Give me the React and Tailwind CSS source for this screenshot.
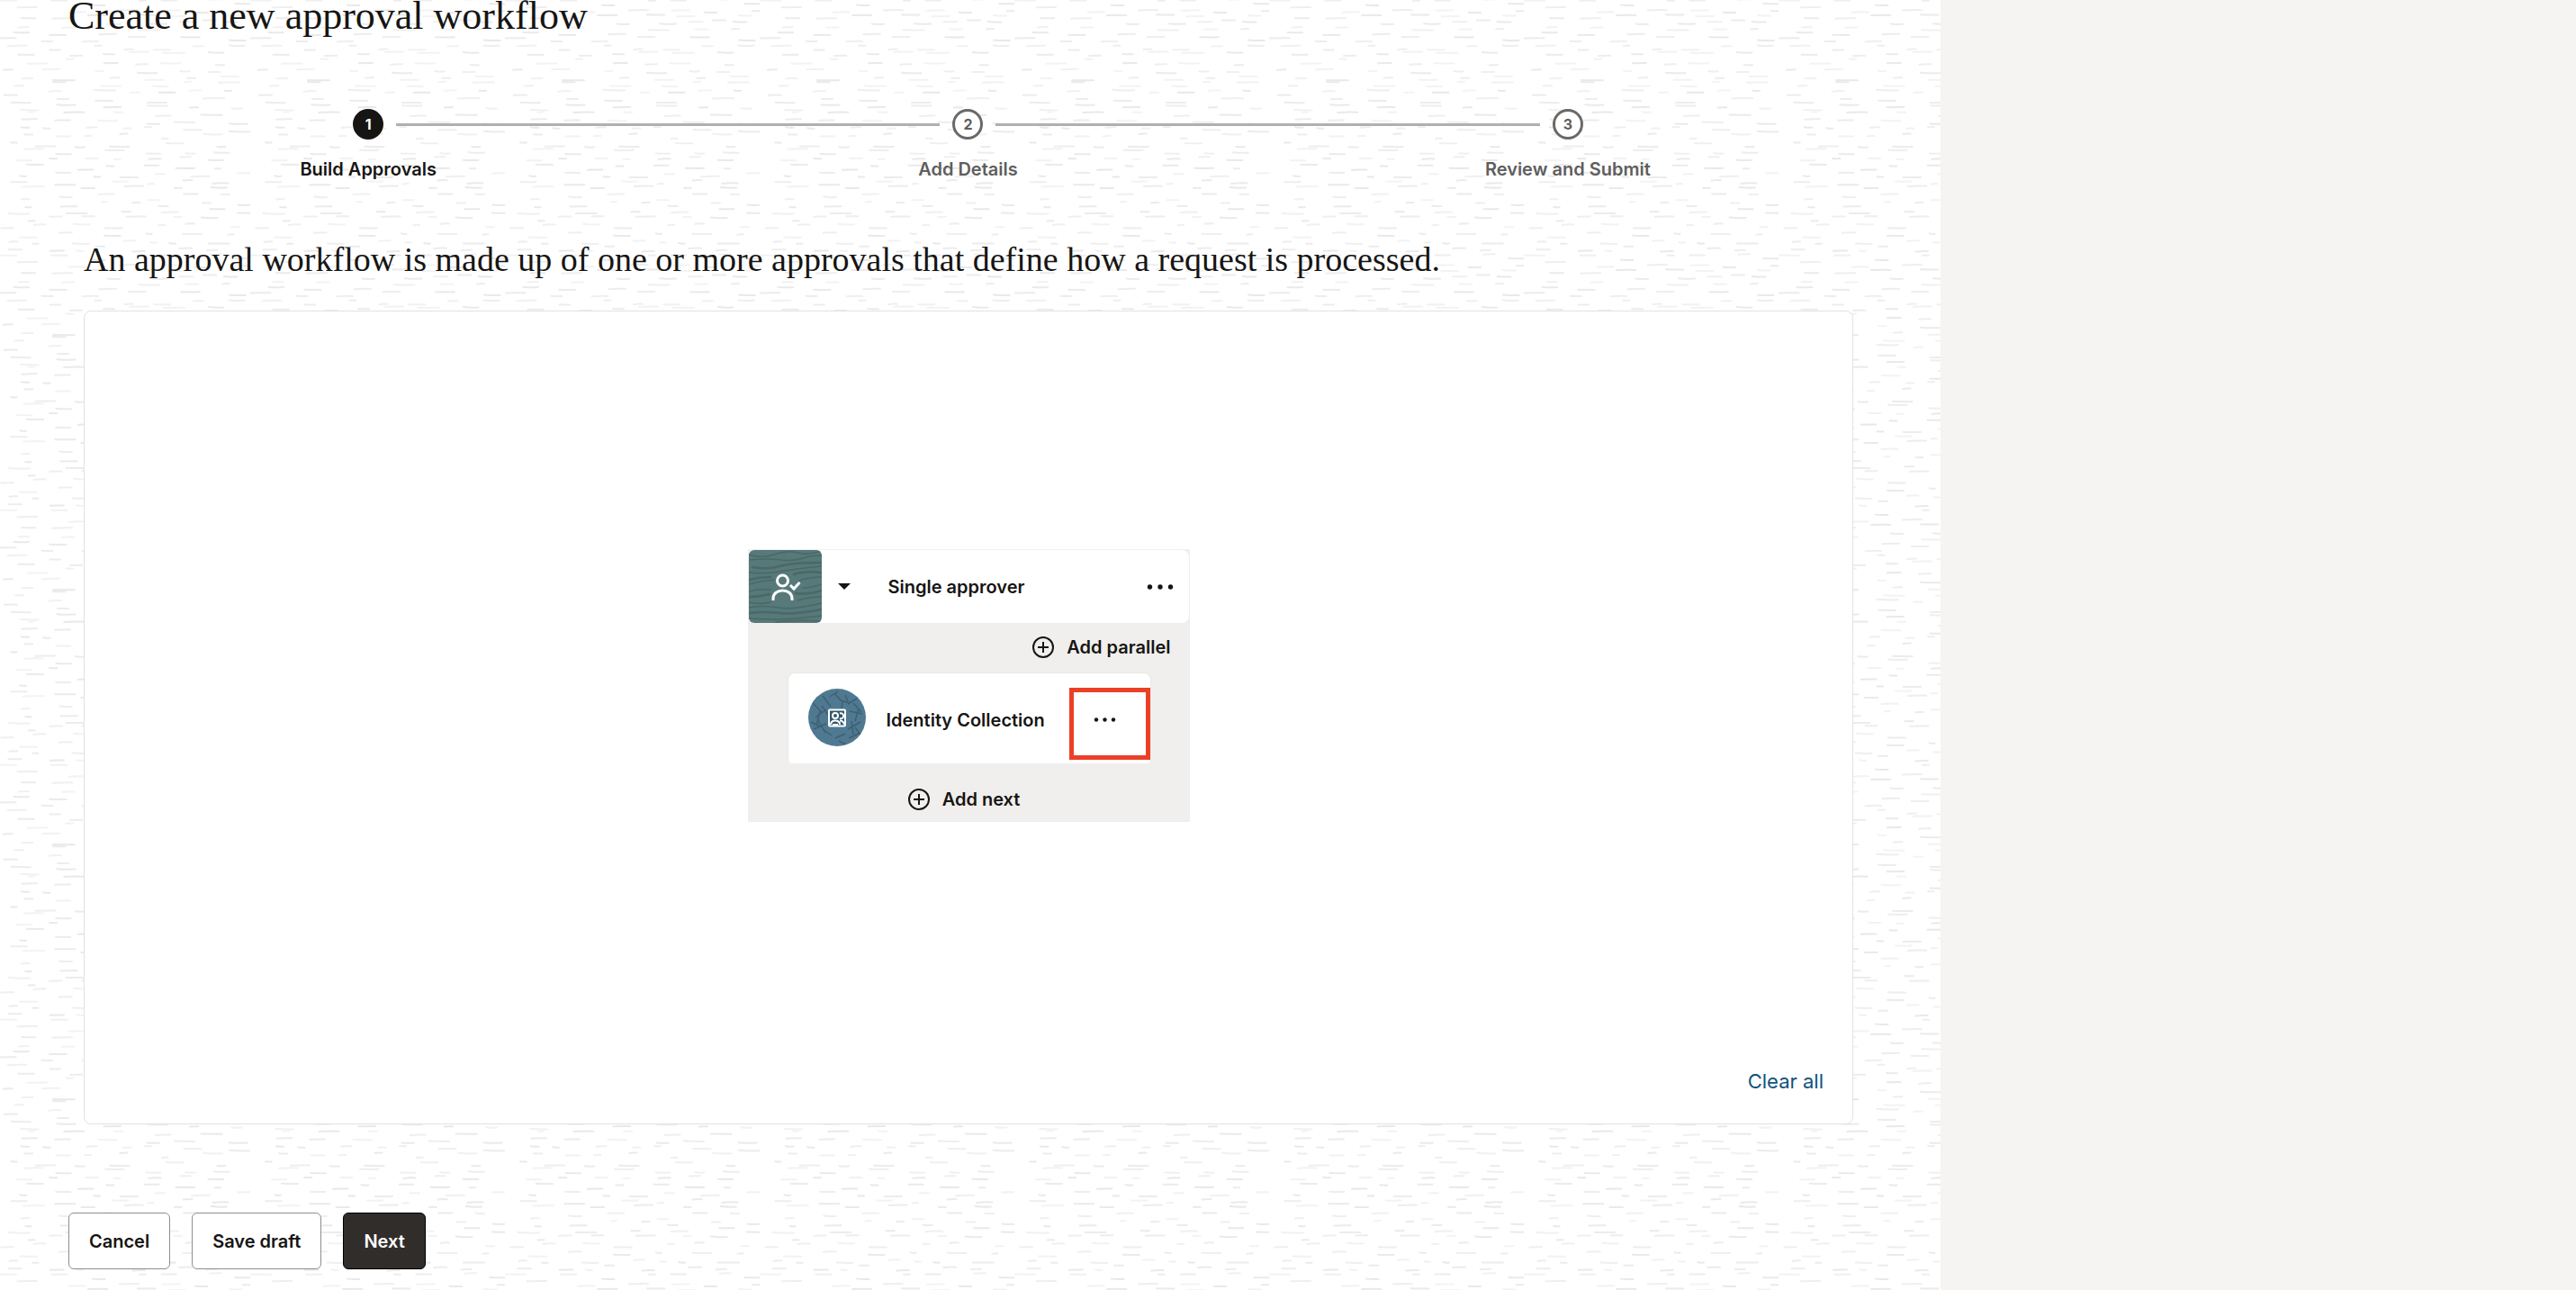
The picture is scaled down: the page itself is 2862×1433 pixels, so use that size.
import React from "react";

const TILE = 283;

/* Deterministic short strokes that repeat every TILE pixels. */
function makeStrokes() {
  let seed = 7;
  const rand = () => {
    seed = (seed * 16807) % 2147483647;
    return seed / 2147483647;
  };
  const strokes = [];
  const rows = 34;
  for (let r = 0; r < rows; r++) {
    let x = rand() * 40;
    const baseY = (r * TILE) / rows + 4;
    while (x < TILE - 8) {
      const length = 6 + rand() * 18;
      strokes.push({
        x,
        y: baseY + (rand() - 0.5) * 7,
        length: Math.min(length, TILE - x),
        tilt: (rand() - 0.5) * 2,
        tone: 0.5 + rand() * 0.5,
      });
      x += length + 14 + rand() * 28;
    }
  }
  return strokes;
}

const STROKES = makeStrokes();

function Texture() {
  return (
    <svg className="absolute inset-0 h-full w-full" aria-hidden="true">
      <defs>
        <pattern id="weave" x="-5" y="40" width={TILE} height={TILE} patternUnits="userSpaceOnUse">
          {STROKES.map((s, i) => (
            <path
              key={i}
              d={`M${s.x} ${s.y} q${s.length / 2} ${s.tilt} ${s.length} ${s.tilt / 2}`}
              stroke="#e8e8e8"
              strokeOpacity={s.tone}
              strokeWidth="2"
              strokeLinecap="round"
              fill="none"
            />
          ))}
        </pattern>
      </defs>
      <rect width="100%" height="100%" fill="url(#weave)" />
    </svg>
  );
}

const STEPS = [
  { number: 1, label: "Build Approvals", current: true },
  { number: 2, label: "Add Details", current: false },
  { number: 3, label: "Review and Submit", current: false },
];

function Steps() {
  return (
    <ol className="mt-[85px] grid grid-cols-3">
      {STEPS.map((step, i) => (
        <li key={step.number} className="relative flex flex-col items-center" aria-current={step.current ? "step" : undefined}>
          {i < STEPS.length - 1 && (
            <span className="absolute top-4 left-1/2 mx-[31px] h-[3px] w-[calc(100%-62px)] bg-[#b0b0b0]" />
          )}
          <span
            className={
              step.current
                ? "flex size-[34px] items-center justify-center rounded-full bg-[#161513] text-base font-bold text-white"
                : "flex size-[34px] items-center justify-center rounded-full border-[3px] border-[#6a6968] bg-white text-base font-bold text-[#5f5e5d]"
            }
          >
            {step.number}
          </span>
          <span
            className={
              step.current
                ? "mt-[19px] text-xl leading-7 font-semibold text-[#161513]"
                : "mt-[19px] text-xl leading-7 font-semibold text-[#5f5e5d]"
            }
          >
            {step.label}
          </span>
        </li>
      ))}
    </ol>
  );
}

function ApproverTile() {
  return (
    <svg className="size-[81px] shrink-0 rounded-md" viewBox="0 0 81 81" fill="none" aria-hidden="true">
      <rect width="81" height="81" fill="#57797a" />
      <g stroke="#4a6867" strokeWidth="1.500" strokeLinecap="round">
        <path d="M0 5q14 5 28 0t26-2t27-2" />
        <path d="M0 11q20-2 36 0t30-4l15-1" />
        <path d="M4 19q16 3 30-1t47-4" strokeWidth="2.500" />
        <path d="M0 25q18 2 34-1t47-6" />
        <path d="M0 33q12-3 24-3M50 27q12-4 31-2" strokeWidth="2.500" />
        <path d="M0 38q14-4 28-5M56 34q12-4 25-4" />
        <path d="M0 46q10-3 24-2M60 42q10 0 21-4" />
        <path d="M0 52q12 0 23-3M52 48q12 2 29-3" strokeWidth="2.500" />
        <path d="M0 58q12 3 24 0M54 56q14-4 27-4" />
        <path d="M0 64q16-3 32 0t49-5" />
        <path d="M0 70q18-2 34 0t47-4" strokeWidth="2.500" />
        <path d="M0 76q18 1 32 1t49-4" />
        <path d="M30 80q24-3 51-1" />
      </g>
      <g stroke="#fff" strokeWidth="3">
        <circle cx="37.500" cy="34" r="6" />
        <path d="M27 56v-2c0-6 5-9 10.500-9s10.500 3 10.500 9v2" />
        <path d="M46 39l4 4 6.500-7" />
      </g>
    </svg>
  );
}

function CollectionBadge() {
  return (
    <svg className="size-16 shrink-0" viewBox="0 0 64 64" fill="none" aria-hidden="true">
      <defs>
        <clipPath id="disc">
          <circle cx="32" cy="32" r="32" />
        </clipPath>
      </defs>
      <g clipPath="url(#disc)">
        <rect width="64" height="64" fill="#4f7990" />
        <g stroke="#3e5f74" strokeWidth="1.500">
          <path d="M5 16l10 10M16 8l9 12M24 9l9-6M29 5l8 9M41 7l3 7M44 17l10-6M8 32l12-9M13 25l-4 16M3 37l10 5M11 35l8 14M6 45l14-6M17 46l9 6M30 55l11-5M45 55l11-5M52 43l8 11M48 36l2 15M44 45l14-8M56 22l-4 14M46 25l14 3M50 16l9 10M22 29l-7-10M36 13l10 3M38 14l-1 8M34 58l8 4" />
        </g>
        <rect x="23" y="23.500" width="18" height="18" rx="1" fill="#31576c" stroke="#fff" strokeWidth="2" />
        <circle cx="30" cy="30" r="3" stroke="#fff" strokeWidth="2" />
        <path d="M35 27.500a3 3 0 1 1 0 5.500M25 40c0-3 2-4.500 5-4.500s5 1.500 5 4.500M27 40h6M35 35.500c3 0 4.500 2 5.500 4.500" stroke="#fff" strokeWidth="2" />
      </g>
    </svg>
  );
}

function PlusCircle() {
  return (
    <svg className="size-6" viewBox="0 0 24 24" fill="none" stroke="#161513" strokeWidth="2" aria-hidden="true">
      <circle cx="12" cy="12" r="11" />
      <path d="M12 6v12M6 12h12" />
    </svg>
  );
}

function ApprovalCard() {
  return (
    <section className="w-[491px] bg-[#f0efed] pt-px">
      <div className="mx-px flex h-[81px] items-center rounded-lg bg-white">
        <ApproverTile />
        <button type="button" aria-label="Change approval type" className="ml-[18px] flex h-8 w-[14px] items-center">
          <svg className="h-[7px] w-[14px]" viewBox="0 0 14 7" fill="#161513" aria-hidden="true">
            <path d="M0 0h14L7 7z" />
          </svg>
        </button>
        <h3 className="ml-[42px] flex-1 text-xl leading-7 font-semibold">Single approver</h3>
        <button type="button" aria-label="Single approver actions" className="mr-[17px] flex h-8 items-center">
          <svg className="h-[6px] w-[30px]" viewBox="0 0 30 6" fill="#161513" aria-hidden="true">
            <circle cx="3.500" cy="3" r="2.700" />
            <circle cx="15" cy="3" r="2.700" />
            <circle cx="26.500" cy="3" r="2.700" />
          </svg>
        </button>
      </div>
      <div className="flex justify-end pt-[13px] pr-[21px]">
        <button type="button" className="flex items-center gap-[14px] text-xl leading-7 font-semibold">
          <PlusCircle />
          Add parallel
        </button>
      </div>
      <div className="mt-[14px] mr-[43px] ml-11 flex h-[101px] rounded-t-lg rounded-b-sm border border-b-0 border-[#e9e8e6] bg-white">
        <div className="mt-[17px] ml-[22px]">
          <CollectionBadge />
        </div>
        <h4 className="mt-[38px] ml-[23px] flex-1 text-xl leading-7 font-semibold whitespace-nowrap">Identity Collection</h4>
        <button
          type="button"
          aria-label="Identity Collection actions"
          className="mt-4 flex h-20 w-[90px] justify-center border-[5px] border-[#ec4026] pt-7 pr-[10px]"
        >
          <svg className="h-[5px] w-[25px]" viewBox="0 0 25 5" fill="#161513" aria-hidden="true">
            <circle cx="3" cy="2.500" r="2.200" />
            <circle cx="12.500" cy="2.500" r="2.200" />
            <circle cx="22" cy="2.500" r="2.200" />
          </svg>
        </button>
      </div>
      <div className="flex justify-center pt-[26px] pr-[10px] pb-[11px]">
        <button type="button" className="flex items-center gap-[14px] text-xl leading-7 font-semibold">
          <PlusCircle />
          Add next
        </button>
      </div>
    </section>
  );
}

export default function App() {
  return (
    <div className="flex min-h-screen bg-[#f5f4f2] font-['Inter','Liberation_Sans',sans-serif] text-[#161513]">
      <main className="relative flex-1 bg-white">
        <Texture />
        <div className="relative pr-[81px] pl-[76px]">
          <h1 className="font-['Liberation_Serif',serif] text-[44px] leading-9">Create a new approval workflow</h1>
          <Steps />
          <div className="mr-4 ml-[17px]">
            <h2 className="mt-14 font-['Liberation_Serif',serif] text-[38px] leading-[60px]">
              An approval workflow is made up of one or more approvals that define how a request is processed.
            </h2>
            <section className="mt-[27px] flex flex-col items-center rounded-lg border border-[#e2e2e2] bg-white px-8 pt-[264px] pb-[31px]">
              <ApprovalCard />
              <button type="button" className="mt-[272px] self-end text-[22px] leading-8 text-[#0f5380]">
                Clear all
              </button>
            </section>
          </div>
          <footer className="mt-[98px] flex gap-6 pb-6">
            <button type="button" className="h-[63px] rounded-md border border-[#8f8e8d] bg-white px-[22px] text-xl font-semibold">
              Cancel
            </button>
            <button type="button" className="h-[63px] rounded-md border border-[#8f8e8d] bg-white px-[22px] text-xl font-semibold">
              Save draft
            </button>
            <button type="button" className="h-[63px] rounded-md border border-black bg-[#312d2a] px-[22px] text-xl font-semibold text-white">
              Next
            </button>
          </footer>
        </div>
      </main>
      <aside className="w-[706px] shrink-0" />
    </div>
  );
}
